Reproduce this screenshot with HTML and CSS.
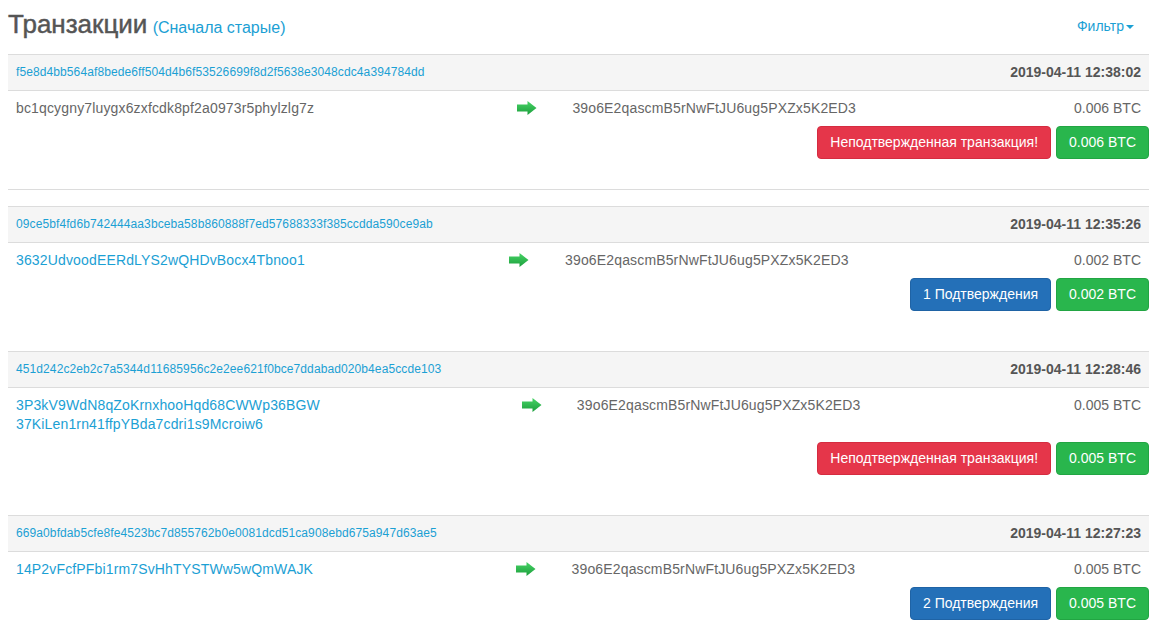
FILE: index.html
```html
<!DOCTYPE html>
<html lang="ru">
<head>
<meta charset="utf-8">
<title>Транзакции</title>
<link rel="stylesheet" href="styles.css">
</head>
<body>
<div class="page">
  <header class="page-head">
    <h1 class="title">Транзакции <a class="sort" href="#">(Сначала старые)</a></h1>
    <a class="filter" href="#">Фильтр<span class="caret"></span></a>
  </header>

  <section class="tx tx-first">
    <div class="tx-head">
      <a class="hash" href="#">f5e8d4bb564af8bede6ff504d4b6f53526699f8d2f5638e3048cdc4a394784dd</a>
      <span class="date">2019-04-11 12:38:02</span>
    </div>
    <table class="flow">
      <tr>
        <td class="addr from own">bc1qcygny7luygx6zxfcdk8pf2a0973r5phylzlg7z</td>
        <td class="arrow"><svg width="20" height="14" viewBox="0 0 20 14"><defs><linearGradient id="g1" x1="0" y1="0" x2="0" y2="1"><stop offset="0" stop-color="#47d466"/><stop offset="1" stop-color="#1c9e3c"/></linearGradient></defs><path d="M0 3.5H10.5V0L19.5 7L10.5 14V10.5H0Z" fill="url(#g1)"/></svg></td>
        <td class="addr">39o6E2qascmB5rNwFtJU6ug5PXZx5K2ED3</td>
        <td class="amount">0.006 BTC</td>
      </tr>
    </table>
    <div class="actions">
      <span class="btn btn-danger">Неподтвержденная транзакция!</span>
      <span class="btn btn-success">0.006 BTC</span>
    </div>
  </section>
  <div class="divider"></div>

  <section class="tx">
    <div class="tx-head">
      <a class="hash" href="#">09ce5bf4fd6b742444aa3bceba58b860888f7ed57688333f385ccdda590ce9ab</a>
      <span class="date">2019-04-11 12:35:26</span>
    </div>
    <table class="flow">
      <tr>
        <td class="addr from"><a href="#">3632UdvoodEERdLYS2wQHDvBocx4Tbnoo1</a></td>
        <td class="arrow"><svg width="20" height="14" viewBox="0 0 20 14"><defs><linearGradient id="g2" x1="0" y1="0" x2="0" y2="1"><stop offset="0" stop-color="#47d466"/><stop offset="1" stop-color="#1c9e3c"/></linearGradient></defs><path d="M0 3.5H10.5V0L19.5 7L10.5 14V10.5H0Z" fill="url(#g2)"/></svg></td>
        <td class="addr">39o6E2qascmB5rNwFtJU6ug5PXZx5K2ED3</td>
        <td class="amount">0.002 BTC</td>
      </tr>
    </table>
    <div class="actions">
      <span class="btn btn-primary">1 Подтверждения</span>
      <span class="btn btn-success">0.002 BTC</span>
    </div>
  </section>

  <section class="tx">
    <div class="tx-head">
      <a class="hash" href="#">451d242c2eb2c7a5344d11685956c2e2ee621f0bce7ddabad020b4ea5ccde103</a>
      <span class="date">2019-04-11 12:28:46</span>
    </div>
    <table class="flow">
      <tr>
        <td class="addr from"><a href="#">3P3kV9WdN8qZoKrnxhooHqd68CWWp36BGW</a><br><a href="#">37KiLen1rn41ffpYBda7cdri1s9Mcroiw6</a></td>
        <td class="arrow"><svg width="20" height="14" viewBox="0 0 20 14"><defs><linearGradient id="g3" x1="0" y1="0" x2="0" y2="1"><stop offset="0" stop-color="#47d466"/><stop offset="1" stop-color="#1c9e3c"/></linearGradient></defs><path d="M0 3.5H10.5V0L19.5 7L10.5 14V10.5H0Z" fill="url(#g3)"/></svg></td>
        <td class="addr">39o6E2qascmB5rNwFtJU6ug5PXZx5K2ED3</td>
        <td class="amount">0.005 BTC</td>
      </tr>
    </table>
    <div class="actions">
      <span class="btn btn-danger">Неподтвержденная транзакция!</span>
      <span class="btn btn-success">0.005 BTC</span>
    </div>
  </section>

  <section class="tx">
    <div class="tx-head">
      <a class="hash" href="#">669a0bfdab5cfe8fe4523bc7d855762b0e0081dcd51ca908ebd675a947d63ae5</a>
      <span class="date">2019-04-11 12:27:23</span>
    </div>
    <table class="flow">
      <tr>
        <td class="addr from"><a href="#">14P2vFcfPFbi1rm7SvHhTYSTWw5wQmWAJK</a></td>
        <td class="arrow"><svg width="20" height="14" viewBox="0 0 20 14"><defs><linearGradient id="g4" x1="0" y1="0" x2="0" y2="1"><stop offset="0" stop-color="#47d466"/><stop offset="1" stop-color="#1c9e3c"/></linearGradient></defs><path d="M0 3.5H10.5V0L19.5 7L10.5 14V10.5H0Z" fill="url(#g4)"/></svg></td>
        <td class="addr">39o6E2qascmB5rNwFtJU6ug5PXZx5K2ED3</td>
        <td class="amount">0.005 BTC</td>
      </tr>
    </table>
    <div class="actions">
      <span class="btn btn-primary">2 Подтверждения</span>
      <span class="btn btn-success">0.005 BTC</span>
    </div>
  </section>
</div>
</body>
</html>
```

FILE: styles.css
```css
* { box-sizing: border-box; }

html, body {
  margin: 0;
  padding: 0;
  background: #fff;
}

body {
  font-family: "Liberation Sans", Arial, Helvetica, sans-serif;
  font-size: 14px;
  line-height: 19px;
  color: #666;
}

a {
  color: #1ba0d4;
  text-decoration: none;
}

.page {
  padding: 0 8px;
}

.page-head {
  display: flex;
  justify-content: space-between;
  align-items: flex-start;
  height: 54px;
  padding-top: 9px;
}

.title {
  margin: 0;
  font-size: 26px;
  line-height: 30px;
  font-weight: 500;
  color: #555;
  -webkit-text-stroke: 0.45px #555;
}

.sort {
  font-size: 16px;
  font-weight: normal;
  -webkit-text-stroke: 0;
  margin-left: -2px;
}

.filter {
  margin-top: 7px;
  margin-right: 15px;
  font-size: 14px;
  line-height: 20px;
}

.caret {
  display: inline-block;
  width: 0;
  height: 0;
  margin-left: 2px;
  vertical-align: middle;
  border-top: 4px solid #1ba0d4;
  border-left: 4px solid transparent;
  border-right: 4px solid transparent;
}

.tx {
  border-top: 1px solid #dcdcdc;
  margin-bottom: 40px;
}

.tx-first {
  margin-bottom: 30px;
}

.divider {
  border-top: 1px solid #dcdcdc;
  margin-bottom: 16px;
}

.tx-head {
  display: flex;
  justify-content: space-between;
  align-items: center;
  height: 36px;
  padding: 0 8px;
  background: #f5f5f5;
  border-bottom: 1px solid #dcdcdc;
}

.hash {
  font-size: 12px;
  letter-spacing: 0.1px;
}

.date {
  font-weight: bold;
  font-size: 14px;
  color: #555;
}

.flow {
  width: 100%;
  border-collapse: collapse;
}

.flow td {
  padding: 8px;
  vertical-align: top;
  white-space: nowrap;
}

.addr {
  letter-spacing: 0.15px;
}

.flow td.from {
  padding-right: 22px;
}

.addr.own {
  color: #666;
}

.arrow svg {
  display: block;
  margin-top: 2px;
}

.amount {
  text-align: right;
}

.actions {
  display: flex;
  justify-content: flex-end;
  gap: 5px;
}

.btn {
  display: inline-block;
  padding: 6px 12px;
  font-size: 14px;
  line-height: 19px;
  color: #fff;
  border: 1px solid transparent;
  border-radius: 4px;
}

.btn-danger {
  background: #e5364a;
  border-color: #d52c40;
}

.btn-success {
  background: #29b64d;
  border-color: #22a543;
}

.btn-primary {
  background: #2470b8;
  border-color: #1f63a5;
}
```
